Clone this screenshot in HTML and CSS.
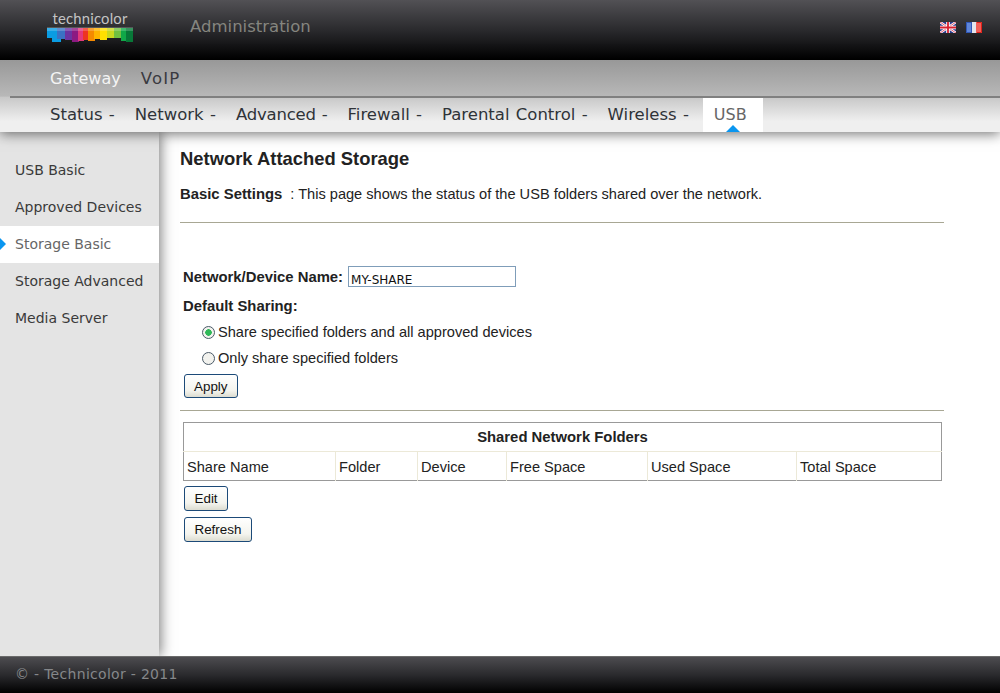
FILE: index.html
```html
<!DOCTYPE html>
<html lang="en">
<head>
  <meta charset="UTF-8" />
  <title>Technicolor - Administration</title>
  <link rel="stylesheet" href="styles.css">
</head>
<body>
  <header class="top">
    <div class="logo">
      <span class="logo-text">technicolor</span>
      <svg class="logo-bars" width="86" height="16" viewBox="0 0 86 16">
        <rect x="0" y="1" width="11" height="10" fill="#0a9ce2"/>
        <rect x="5" y="1" width="9" height="14" fill="#0a9ce2"/>
        <rect x="10" y="1" width="9" height="11" fill="#3a72c4"/>
        <rect x="18" y="1" width="8" height="12" fill="#6a34a2"/>
        <rect x="25" y="1" width="7" height="14" fill="#8c1a82"/>
        <rect x="31" y="1" width="6" height="13" fill="#e2387c"/>
        <rect x="36" y="1" width="6" height="12" fill="#ee3422"/>
        <rect x="41" y="1" width="7" height="13" fill="#f58a00"/>
        <rect x="47" y="1" width="6" height="11" fill="#ffb400"/>
        <rect x="53" y="1" width="7" height="12" fill="#ffe000"/>
        <rect x="60" y="1" width="7" height="10" fill="#c8d820"/>
        <rect x="67" y="1" width="7" height="10" fill="#70c040"/>
        <rect x="74" y="1" width="5" height="13" fill="#10a848"/>
        <rect x="79" y="1" width="7" height="14" fill="#087838"/>
        <rect x="0" y="0" width="86" height="4" fill="#fff" opacity="0.2"/>
      </svg>
    </div>
    <div class="app-title">Administration</div>
    <div class="flags">
      <svg width="16" height="11" viewBox="0 0 16 11">
        <rect width="16" height="11" fill="#2a3a8c"/>
        <path d="M0 0L16 11M16 0L0 11" stroke="#fff" stroke-width="2.4"/>
        <path d="M0 0L16 11M16 0L0 11" stroke="#d83048" stroke-width="0.8"/>
        <path d="M8 0V11M0 5.5H16" stroke="#fff" stroke-width="3.6"/>
        <path d="M8 0V11M0 5.5H16" stroke="#d82030" stroke-width="1.8"/>
      </svg>
      <svg width="16" height="11" viewBox="0 0 16 11">
        <rect width="6" height="11" fill="#5f86d8"/>
        <rect x="5" width="6" height="11" fill="#e4e6ee"/>
        <rect x="10" width="6" height="11" fill="#f0605a"/>
        <rect x="0.5" y="0.5" width="5" height="10" fill="none" stroke="#3058b8"/>
        <path d="M11 0.5H15.5V10.5H11" fill="none" stroke="#e02018"/>
      </svg>
    </div>
  </header>

  <nav class="nav">
    <div class="nav-main">
      <a class="current">Gateway</a>
      <a class="voip">VoIP</a>
    </div>
    <div class="nav-sub">
      <a>Status -</a>
      <a>Network -</a>
      <a class="adv">Advanced -</a>
      <a>Firewall -</a>
      <a>Parental Control -</a>
      <a>Wireless -</a>
      <a class="active">USB</a>
    </div>
  </nav>

  <div class="page">
    <aside class="sidebar">
      <a>USB Basic</a>
      <a>Approved Devices</a>
      <a class="active">Storage Basic</a>
      <a>Storage Advanced</a>
      <a>Media Server</a>
    </aside>

    <main class="content">
      <h1>Network Attached Storage</h1>
      <p class="intro"><b>Basic Settings</b><span>: This page shows the status of the USB folders shared over the network.</span></p>
      <hr class="rule-first">

      <form class="settings">
        <div class="name-row">
          <label for="devName">Network/Device Name:</label>
          <input type="text" id="devName" value="MY-SHARE">
        </div>
        <div class="group-label">Default Sharing:</div>
        <label class="radio-row"><span class="radio on"></span>Share specified folders and all approved devices</label>
        <label class="radio-row"><span class="radio"></span>Only share specified folders</label>
        <button type="button" class="btn btn-apply">Apply</button>
      </form>
      <hr class="rule-second">

      <table class="folders">
        <colgroup>
          <col class="c1"><col class="c2"><col class="c3"><col class="c4"><col class="c5"><col>
        </colgroup>
        <tr><th colspan="6">Shared Network Folders</th></tr>
        <tr class="heads">
          <td>Share Name</td>
          <td>Folder</td>
          <td>Device</td>
          <td>Free Space</td>
          <td>Used Space</td>
          <td>Total Space</td>
        </tr>
      </table>
      <div class="actions">
        <button type="button" class="btn">Edit</button>
        <button type="button" class="btn">Refresh</button>
      </div>
    </main>
  </div>

  <footer class="foot">© - Technicolor - 2011</footer>
</body>
</html>
```

FILE: styles.css
```css
* {
  box-sizing: border-box;
}

html, body {
  margin: 0;
  height: 693px;
  overflow: hidden;
}

body {
  display: flex;
  flex-direction: column;
  background: #fff;
  font-family: 'Liberation Sans', Arial, sans-serif;
  font-size: 14.6px;
  color: #222;
}

/* top bar */
.top {
  height: 60px;
  flex: none;
  display: flex;
  align-items: flex-start;
  background: linear-gradient(#525155, #2a2a2d 50%, #000);
}

.logo {
  width: 190px;
  padding: 9px 0 0 47px;
}

.logo-text {
  display: block;
  width: 86px;
  text-align: center;
  font-family: Lato, sans-serif;
  font-size: 14.8px;
  line-height: 18px;
  letter-spacing: 0.2px;
  color: #c4c4c4;
}

.logo-bars {
  display: block;
}

.app-title {
  padding-top: 17px;
  font-family: 'DejaVu Sans', sans-serif;
  font-size: 16.5px;
  line-height: 20px;
  color: #85857f;
}

.flags {
  margin-left: auto;
  padding: 22px 18px 0 0;
  display: flex;
  gap: 10px;
}

.flags svg {
  display: block;
}

/* nav */
.nav {
  height: 72px;
  flex: none;
  position: relative;
  z-index: 2;
  background: linear-gradient(#989898, #b8b8b8 50%, #c8c8c8 52%, #efefef 85%);
  box-shadow: 0 2px 12px rgba(0, 0, 0, 0.55);
  font-family: 'DejaVu Sans', sans-serif;
  font-size: 16.5px;
}

.nav-main {
  height: 36px;
  padding-left: 50px;
  display: flex;
  align-items: center;
  gap: 20px;
  color: #3a3a40;
}

.nav-main .current {
  font-size: 16px;
  color: #f4f4f4;
}

.nav-main .voip {
  letter-spacing: 1.2px;
}

.nav-sub {
  height: 36px;
  margin-left: 10px;
  padding: 0 0 2px 40px;
  border-top: 2px solid #808080;
  display: flex;
  align-items: center;
  gap: 20px;
  word-spacing: 1px;
  color: #2f3338;
}

.nav-sub .adv {
  letter-spacing: -0.2px;
}

.nav-sub .active {
  position: relative;
  align-self: stretch;
  margin: 0 0 -2px -6px;
  padding: 5px 16px 0 11px;
  line-height: 24px;
  background: #fff;
  font-size: 16px;
  color: #666;
}

.nav-sub .active::after {
  content: "";
  position: absolute;
  left: 50%;
  bottom: 0;
  margin-left: -7px;
  border: 7px solid transparent;
  border-top: 0;
  border-bottom-color: #0a96f0;
}

/* sidebar + content */
.page {
  flex: 1;
  display: flex;
  min-height: 0;
}

.sidebar {
  width: 159px;
  flex: none;
  padding-top: 20px;
  background: #e4e4e4;
  box-shadow: 2px 0 12px rgba(0, 0, 0, 0.5);
  position: relative;
  font-family: 'DejaVu Sans', sans-serif;
  font-size: 14px;
  color: #3a3a3a;
}

.sidebar a {
  display: block;
  height: 37px;
  line-height: 37px;
  padding-left: 15px;
  white-space: nowrap;
}

.sidebar .active {
  position: relative;
  background: #fff;
  color: #666;
}

.sidebar .active::before {
  content: "";
  position: absolute;
  left: 0;
  top: 12px;
  border: 6px solid transparent;
  border-right: 0;
  border-left-color: #0a96f0;
}

.content {
  flex: 1;
  padding: 16px 56px 0 21px;
}

h1 {
  margin: 0;
  font-size: 18.4px;
  line-height: 22px;
  color: #222;
}

b, label[for], .group-label, .folders th {
  font-size: 14.85px;
}

.intro {
  margin: 15px 0 0;
  line-height: 18px;
  color: #222;
}

.intro span {
  margin-left: 8px;
}

hr {
  margin: 0;
  border: 0;
  height: 1px;
  background: #a8a794;
}

.rule-first {
  margin-top: 19px;
}

.settings {
  padding: 43px 0 0 3px;
}

.name-row {
  height: 22px;
  display: flex;
  align-items: center;
  gap: 5px;
}

.name-row label,
.group-label {
  font-weight: bold;
}

.name-row input {
  width: 168px;
  height: 21px;
  margin-top: -2px;
  padding: 7px 2px 0;
  border: 1px solid #7f9db9;
  font-family: 'DejaVu Sans', sans-serif;
  font-size: 12px;
  color: #111;
}

.group-label {
  margin-top: 8px;
  height: 23px;
  line-height: 20px;
}

.radio-row {
  display: flex;
  align-items: center;
  height: 26px;
  margin-left: 19px;
}

.radio {
  width: 13px;
  height: 13px;
  margin-right: 3px;
  border: 1px solid #4a5a68;
  border-radius: 50%;
  background: #f2f2ee;
}

.radio.on {
  background: radial-gradient(circle, #30b858 0 3px, #f2f2ee 3.5px);
}

.btn {
  display: block;
  height: 24px;
  padding: 0 9px;
  border: 1px solid #1c4a78;
  border-radius: 3px;
  background: linear-gradient(#fff, #f4f4ee 70%, #dcdcd0);
  font-family: 'Liberation Sans', Arial, sans-serif;
  font-size: 13.4px;
  color: #111;
}

.btn-apply {
  margin: 3px 0 0 1px;
}

.rule-second {
  margin-top: 12px;
}

.folders {
  width: 759px;
  margin: 11px 0 0 3px;
  border-collapse: collapse;
  table-layout: fixed;
  border: 1px solid #999;
}

.folders th {
  height: 29px;
  font-weight: bold;
  text-align: center;
  border-bottom: 1px solid #ece9d8;
}

.folders td {
  height: 29px;
  padding: 2px 3px 0;
  border-right: 1px solid #ece9d8;
}

.folders td:last-child {
  border-right: 0;
}

.c1 { width: 152px; }
.c2 { width: 82px; }
.c3 { width: 89px; }
.c4 { width: 141px; }
.c5 { width: 149px; }

.actions {
  margin: 5px 0 0 4px;
  display: flex;
  flex-direction: column;
  align-items: flex-start;
  gap: 6px;
}

.actions .btn {
  height: 25px;
  padding: 0 9.5px;
}

/* footer */
.foot {
  height: 37px;
  flex: none;
  position: relative;
  z-index: 3;
  padding-left: 15px;
  border-top: 1px solid #6a6a6a;
  background: linear-gradient(#4d4c50, #2a2a2d 50%, #000);
  font-family: 'DejaVu Sans', sans-serif;
  font-size: 14px;
  letter-spacing: 0.3px;
  line-height: 34px;
  color: #85878a;
}
```
